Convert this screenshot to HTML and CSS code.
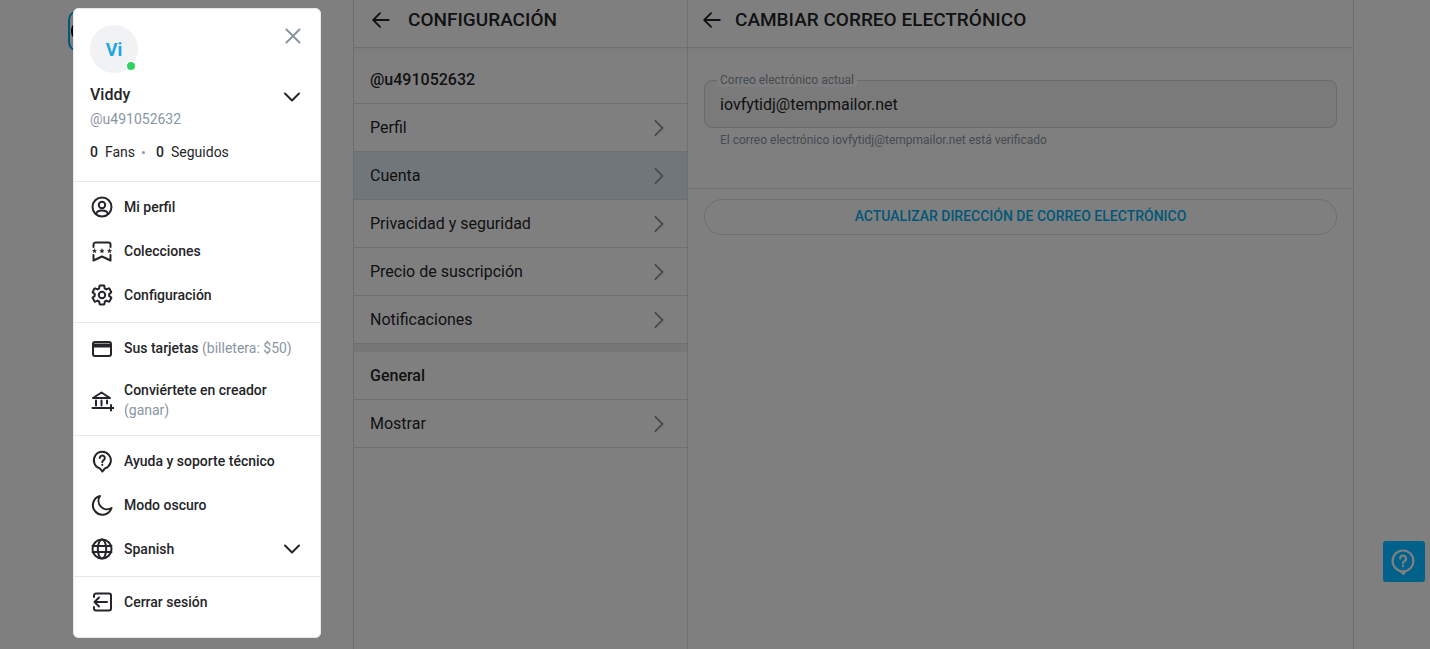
FILE: index.html
```html
<!DOCTYPE html>
<html lang="es">
<head>
    <meta charset="UTF-8">
    <meta name="viewport" content="width=device-width, initial-scale=1.0">
    <title>Cambiar correo electrónico</title>
    <link rel="stylesheet" href="styles.css">
</head>
<body>
    <div class="page">
        <aside class="side-nav">
            <button class="logo-btn" type="button"></button>
        </aside>

        <section class="settings-col">
            <header class="col-header">
                <svg class="back-icon" viewBox="0 0 24 24"><path d="M20.5 12H3.5M11 4.5 3.5 12l7.5 7.5"/></svg>
                <h1>Configuración</h1>
            </header>
            <div class="row row-head">@u491052632</div>
            <a class="row">Perfil <svg class="chev" viewBox="0 0 24 24"><path d="m8 4 8 8-8 8"/></svg></a>
            <a class="row row-active">Cuenta <svg class="chev" viewBox="0 0 24 24"><path d="m8 4 8 8-8 8"/></svg></a>
            <a class="row">Privacidad y seguridad <svg class="chev" viewBox="0 0 24 24"><path d="m8 4 8 8-8 8"/></svg></a>
            <a class="row">Precio de suscripción <svg class="chev" viewBox="0 0 24 24"><path d="m8 4 8 8-8 8"/></svg></a>
            <a class="row">Notificaciones <svg class="chev" viewBox="0 0 24 24"><path d="m8 4 8 8-8 8"/></svg></a>
            <div class="band"></div>
            <div class="row row-head row-general">General</div>
            <a class="row">Mostrar <svg class="chev" viewBox="0 0 24 24"><path d="m8 4 8 8-8 8"/></svg></a>
        </section>

        <main class="detail-col">
            <header class="col-header col-header-detail">
                <svg class="back-icon" viewBox="0 0 24 24"><path d="M20.5 12H3.5M11 4.5 3.5 12l7.5 7.5"/></svg>
                <h1>Cambiar correo electrónico</h1>
            </header>
            <div class="email-form">
                <fieldset class="field">
                    <legend>Correo electrónico actual</legend>
                    <span class="field-value">iovfytidj@tempmailor.net</span>
                </fieldset>
                <p class="field-help">El correo electrónico iovfytidj@tempmailor.net está verificado</p>
            </div>
            <div class="form-actions">
                <button class="pill-btn" type="button">Actualizar dirección de correo electrónico</button>
            </div>
        </main>
    </div>

    <div class="overlay"></div>

    <button class="help-btn" type="button">
        <svg viewBox="0 0 24 24"><circle cx="12" cy="11" r="9.6"/><path d="M9.4 8.8a2.7 2.7 0 1 1 4 2.4c-.9.5-1.400 1-1.400 2"/><path d="M12 15.600v.4"/><path d="m9.500 20.200 3 2.800 2-2.800"/></svg>
    </button>

    <div class="drawer">
        <div class="drawer-top">
            <div class="avatar">Vi<span class="online"></span></div>
            <svg class="close-icon" viewBox="0 0 24 24"><path d="M5.500 5.500l13 13M18.500 5.500l-13 13"/></svg>
        </div>
        <div class="user-name">Viddy <svg class="chev-down" viewBox="0 0 24 24"><path d="m5 8.500 7 7 7-7"/></svg></div>
        <div class="user-handle">@u491052632</div>
        <div class="user-stats"><b>0</b> Fans <i></i> <b>0</b> Seguidos</div>

        <ul class="menu">
            <li>
                <svg viewBox="0 0 24 24"><circle cx="12" cy="12" r="9.500"/><circle cx="12" cy="10" r="3.200"/><path d="M6 19c.6-2.600 2.600-3.600 6-3.600s5.400 1 6 3.600"/></svg>
                Mi perfil
            </li>
            <li>
                <svg viewBox="0 0 24 24"><path d="M3.500 8V5.500a2 2 0 0 1 2-2h13a2 2 0 0 1 2 2V8M3.500 16v5.500l8.500-4 8.500 4V16"/><polygon class="star" points="4.500,9.800 5.100,11.300 6.600,11.300 5.500,12.300 5.800,13.800 4.500,13 3.200,13.800 3.500,12.300 2.400,11.300 3.900,11.300"/><polygon class="star" points="12,9.800 12.600,11.300 14.100,11.300 13,12.300 13.300,13.800 12,13 10.700,13.800 11,12.300 9.900,11.300 11.400,11.300"/><polygon class="star" points="19.500,9.800 20.100,11.300 21.600,11.300 20.500,12.300 20.800,13.800 19.500,13 18.200,13.800 18.500,12.300 17.400,11.300 18.900,11.300"/></svg>
                Colecciones
            </li>
            <li>
                <svg viewBox="0 0 24 24"><path d="M19.100 12.900c.1-.3.1-.6.1-.9s0-.6-.1-.9l2-1.600c.2-.1.2-.4.100-.6l-1.900-3.300c-.1-.2-.4-.3-.6-.2l-2.400 1c-.5-.4-1-.7-1.600-.9l-.4-2.600c0-.2-.2-.4-.5-.4h-3.800c-.2 0-.4.200-.5.400l-.4 2.600c-.6.200-1.100.5-1.600.9l-2.400-1c-.2-.1-.5 0-.6.200L2.700 8.900c-.1.200-.1.500.1.600l2 1.600c0 .3-.1.600-.1.900s0 .6.1.9l-2 1.600c-.2.100-.2.400-.1.600l1.900 3.300c.1.200.4.300.6.200l2.400-1c.5.400 1 .7 1.600.9l.4 2.600c0 .2.200.4.500.4h3.800c.2 0 .4-.2.500-.4l.4-2.600c.6-.2 1.100-.5 1.600-.9l2.400 1c.2.100.5 0 .6-.2l1.900-3.300c.1-.2.1-.5-.1-.6z"/><circle cx="12" cy="12" r="3.200"/></svg>
                Configuración
            </li>
        </ul>
        <ul class="menu">
            <li>
                <svg viewBox="0 0 24 24"><rect x="3" y="6" width="18" height="14" rx="2"/><path class="thick" d="M3 9.500h18"/></svg>
                <span>Sus tarjetas <em>(billetera: $50)</em></span>
            </li>
            <li class="item-two-line">
                <svg viewBox="0 0 24 24"><path d="M3 10 11.500 4.500 20 10zM6 12.500v5M11.500 12.500v5M17 12.500v3M2.500 20h14M21 17v5.500M18 20h6"/></svg>
                <span>Conviértete en creador<br><em>(ganar)</em></span>
            </li>
        </ul>
        <ul class="menu">
            <li>
                <svg viewBox="0 0 24 24"><path d="M12.300 22.500 10 19.500A8.500 8.500 0 1 1 15 19.400z"/><path d="M9.800 9a2.500 2.500 0 1 1 3.800 2.200c-.9.500-1.300 1-1.300 2"/><path d="M12.300 15.700v.3"/></svg>
                Ayuda y soporte técnico
            </li>
            <li>
                <svg viewBox="0 0 24 24"><path d="M10 3a9.500 9.500 0 1 0 11.500 12A8.500 8.500 0 0 1 10 3z"/></svg>
                Modo oscuro
            </li>
            <li>
                <svg viewBox="0 0 24 24"><circle cx="12" cy="12" r="9.500"/><ellipse cx="12" cy="12" rx="4.200" ry="9.500"/><path d="M2.500 9h19M2.500 15h19"/></svg>
                Spanish
                <svg class="chev-down" viewBox="0 0 24 24"><path d="m5 8.500 7 7 7-7"/></svg>
            </li>
        </ul>
        <ul class="menu">
            <li>
                <svg viewBox="0 0 24 24"><path d="M4 7V5.500a2 2 0 0 1 2-2h13a2 2 0 0 1 2 2v13a2 2 0 0 1-2 2H6a2 2 0 0 1-2-2V17M17 12H4.500M9 7.500 4.500 12 9 16.500"/></svg>
                Cerrar sesión
            </li>
        </ul>
    </div>
</body>
</html>
```

FILE: styles.css
```css
* {
    box-sizing: border-box;
}
html, body {
    height: 100%;
}
body {
    margin: 0;
    overflow: hidden;
    background: #fff;
    color: #242529;
    font-family: Roboto, "Liberation Sans", sans-serif;
}
.page {
    display: flex;
    height: 649px;
}
.side-nav {
    width: 353px;
    padding: 10px 0 0 68px;
}
.logo-btn {
    display: flex;
    align-items: center;
    width: 44px;
    height: 42px;
    padding: 0 0 0 1px;
    background: #fff;
    border: 2px solid #00aff0;
    border-radius: 10px;
}
.logo-btn::before {
    content: "";
    width: 18px;
    height: 18px;
    border: 2px solid #000;
    border-radius: 50%;
}
.settings-col {
    width: 335px;
    border-left: 1px solid #dedede;
    border-right: 1px solid #dedede;
}
.detail-col {
    width: 666px;
    border-right: 1px solid #dedede;
}
.col-header {
    display: flex;
    align-items: center;
    height: 48px;
    padding: 0 0 8px 16px;
    gap: 16px;
    border-bottom: 1px solid #dedede;
}
.col-header-detail {
    padding-left: 13px;
    gap: 12px;
}
.col-header h1 {
    margin: 0;
    font-size: 19px;
    font-weight: 500;
    text-transform: uppercase;
    color: #242529;
}
.back-icon {
    width: 22px;
    height: 22px;
    fill: none;
    stroke: #242529;
    stroke-width: 2;
    stroke-linecap: round;
    stroke-linejoin: round;
}
.row {
    display: flex;
    align-items: center;
    justify-content: space-between;
    height: 48px;
    padding: 0 16px;
    font-size: 16px;
    color: #242529;
    border-bottom: 1px solid #dedede;
}
.row-head {
    height: 56px;
    padding-top: 8px;
    font-weight: 500;
    background: linear-gradient(#f7f7f7, #fff 8px);
}
.row-general {
    height: 48px;
    padding-top: 0;
    background: none;
}
.row-active {
    background: #e2edf5;
}
.band {
    height: 8px;
    background: #eeeeee;
}
.chev {
    width: 24px;
    height: 24px;
    fill: none;
    stroke: #8a96a3;
    stroke-width: 2;
    stroke-linecap: round;
    stroke-linejoin: round;
    transform: scale(.9);
}
.email-form {
    height: 141px;
    padding: 25px 16px 0;
    border-bottom: 1px solid #dedede;
    background: linear-gradient(#f7f7f7, #fff 8px);
}
.field {
    height: 55px;
    margin: 0;
    padding: 0 15px;
    background: #f4f4f4;
    border: 1px solid #d2d2d8;
    border-radius: 8px;
}
.field legend {
    padding: 0 3px;
    margin-left: -3px;
    font-size: 12px;
    line-height: 14px;
    color: #8a96a3;
    background: #fff;
}
.field-value {
    display: block;
    padding-top: 6px;
    font-size: 16px;
    line-height: 24px;
}
.field-help {
    margin: 4px 16px 0;
    font-size: 12px;
    line-height: 16px;
    color: #8a96a3;
}
.form-actions {
    padding: 10px 16px;
}
.pill-btn {
    display: block;
    width: 100%;
    height: 36px;
    padding: 0 0 2px;
    background: #fff;
    border: 1px solid #dedede;
    border-radius: 18px;
    color: #00aff0;
    font-family: inherit;
    font-size: 14px;
    font-weight: 500;
    text-transform: uppercase;
}
.overlay {
    position: fixed;
    inset: 0;
    background: rgba(0, 0, 0, 0.5);
}
.help-btn {
    position: fixed;
    left: 1383px;
    top: 541px;
    width: 42px;
    height: 41px;
    padding: 8px 8px 7px 7px;
    background: #00618a;
    border: none;
    border-radius: 3px;
}
.help-btn svg {
    display: block;
    width: 26px;
    height: 26px;
    fill: none;
    stroke: #808080;
    stroke-width: 2;
    stroke-linecap: round;
    stroke-linejoin: round;
}
.drawer {
    position: fixed;
    left: 73px;
    top: 8px;
    width: 248px;
    height: 630px;
    background: #fff;
    border-radius: 6px;
    box-shadow: inset 0 0 0 1px #e6e8ea;
    color: #242529;
}
.drawer-top {
    display: flex;
    justify-content: space-between;
    padding: 17px 16px 0 17px;
}
.avatar {
    position: relative;
    display: flex;
    align-items: center;
    justify-content: center;
    width: 48px;
    height: 48px;
    background: #f0f2f4;
    border-radius: 50%;
    color: #1da5e8;
    font-size: 18px;
    font-weight: 700;
}
.online {
    position: absolute;
    right: 1px;
    bottom: 1px;
    width: 12px;
    height: 12px;
    background: #2fd45f;
    border: 2px solid #fff;
    border-radius: 50%;
}
.close-icon {
    width: 24px;
    height: 24px;
    margin-top: -1px;
    fill: none;
    stroke: #8a96a3;
    stroke-width: 2;
    stroke-linecap: round;
}
.user-name {
    display: flex;
    align-items: center;
    justify-content: space-between;
    padding: 10px 16px 0 17px;
    font-size: 16px;
    font-weight: 500;
    line-height: 22px;
}
.chev-down {
    width: 24px;
    height: 24px;
    fill: none;
    stroke: #242529;
    stroke-width: 2;
    stroke-linecap: round;
    stroke-linejoin: round;
    transform: translateX(-1px);
}
.user-name .chev-down {
    transform: translate(-1px, 2px);
}
.user-handle {
    padding: 2px 17px 0;
    font-size: 14px;
    line-height: 20px;
    color: #8a96a3;
}
.user-stats {
    display: flex;
    align-items: center;
    gap: 5px;
    height: 52px;
    padding: 0 17px 6px;
    font-size: 14px;
}
.user-stats b {
    font-weight: 500;
    margin-right: 2px;
}
.user-stats i {
    width: 3px;
    height: 3px;
    margin: 0 6px 0 2px;
    background: #8a96a3;
    border-radius: 50%;
}
.menu {
    margin: 0;
    padding: 3px 0 5px;
    list-style: none;
    border-top: 1px solid #e6e8ea;
}
.menu li {
    display: flex;
    align-items: center;
    gap: 10px;
    height: 44px;
    padding: 0 16px 0 17px;
    font-size: 14px;
    font-weight: 500;
}
.menu li > svg:first-child {
    flex: none;
    width: 24px;
    height: 24px;
    fill: none;
    stroke: #242529;
    stroke-width: 2;
    stroke-linecap: round;
    stroke-linejoin: round;
}
.menu li .chev-down {
    margin-left: auto;
}
.menu li > svg .star {
    fill: #242529;
    stroke-width: .4;
}
.menu .thick {
    stroke-width: 4;
    stroke-linecap: butt;
}
.menu em {
    font-style: normal;
    font-weight: 400;
    color: #8a96a3;
}
.menu .item-two-line {
    height: 60px;
    line-height: 20px;
}
```
